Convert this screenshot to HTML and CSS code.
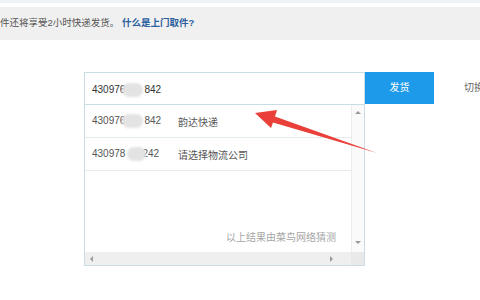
FILE: index.html
```html
<!DOCTYPE html>
<html lang="zh-CN">
<head>
<meta charset="utf-8">
<title>发货</title>
<link rel="stylesheet" href="styles.css">
</head>
<body>
<div class="topline"></div>
<div class="notice">件还将享受2小时快递发货。 <a class="notice-link">什么是上门取件?</a></div>
<div class="form">
  <div class="combo">
    <div class="input">430976<span class="mask"></span>842</div>
    <div class="dropdown">
      <div class="list">
        <div class="row"><span class="num">430976<span class="mask"></span>842</span><span class="co">韵达快递</span></div>
        <div class="row"><span class="num">430978<span class="mask m3"></span>242</span><span class="co">请选择物流公司</span></div>
        <div class="note">以上结果由菜鸟网络猜测</div>
      </div>
      <div class="vscroll"><span class="tri up"></span><span class="tri down"></span></div>
      <div class="hscroll"><span class="tri left"></span><span class="tri right"></span></div>
      <div class="corner"></div>
    </div>
  </div>
  <div class="btn">发货</div>
  <div class="switch">切换</div>
</div>
<svg class="arrow" width="480" height="300" viewBox="0 0 480 300">
  <polygon points="255,113 277,110 275,116.5 377,153 273,122.5 271,128" fill="#e9403a"/>
</svg>
</body>
</html>
```
FILE: styles.css
```css
html, body {
  margin: 0;
  padding: 0;
}
body {
  width: 480px;
  height: 300px;
  overflow: hidden;
  background: #ffffff;
  font-family: "Liberation Sans", "Noto Sans CJK SC", sans-serif;
  position: relative;
}
.topline {
  height: 3px;
  background: #edf2f8;
  border-bottom: 4px solid #ffffff;
}
.notice {
  height: 33px;
  line-height: 32px;
  background: #f0f0f0;
  font-size: 9.5px;
  color: #555555;
  white-space: nowrap;
}
.notice-link {
  color: #2c5f9e;
  font-weight: bold;
}
.form {
  display: flex;
  align-items: flex-start;
  margin: 32px 0 0 84px;
}
.form > * {
  flex-shrink: 0;
}
.combo {
  width: 281px;
}
.input {
  height: 31px;
  line-height: 33px;
  border: 1px solid #c8dde6;
  padding-left: 7px;
  font-size: 10px;
  color: #333333;
}
.mask {
  display: inline-block;
  width: 21px;
  height: 14px;
  margin: 0 1px 0 -3px;
  vertical-align: middle;
  border-radius: 7px;
  background: #e3e3e3;
  filter: blur(1px);
  position: relative;
  z-index: 1;
}
.mask.m3 {
  width: 19px;
  margin: 0 -4px 0 2px;
}
.dropdown {
  height: 160px;
  border: 1px solid #c8dde6;
  border-top: none;
  display: grid;
  grid-template-columns: 1fr 13px;
  grid-template-rows: 1fr 13px;
}
.list {
  display: flex;
  flex-direction: column;
  font-size: 10px;
  color: #555555;
}
.row {
  height: 32px;
  border-bottom: 1px solid #e4ebee;
  display: flex;
  align-items: center;
  padding-left: 7px;
}
.num {
  width: 86px;
}
.note {
  margin-top: auto;
  margin-bottom: 8px;
  padding-right: 15px;
  text-align: right;
  color: #a6a6a6;
}
.vscroll {
  border-left: 1px solid #ececec;
  background: #fafafa;
  display: flex;
  flex-direction: column;
  justify-content: space-between;
  align-items: center;
  padding: 6px 0 8px;
}
.hscroll {
  background: #efefef;
  display: flex;
  justify-content: space-between;
  align-items: center;
  padding: 0 18px 0 5px;
}
.corner {
  background: #e9e9e9;
}
.tri {
  width: 0;
  height: 0;
  border: 3px solid transparent;
}
.tri.up { border-bottom-color: #9a9a9a; border-top-width: 0; }
.tri.down { border-top-color: #9a9a9a; border-bottom-width: 0; }
.tri.left { border-right-color: #9a9a9a; border-left-width: 0; }
.tri.right { border-left-color: #9a9a9a; border-right-width: 0; }
.btn {
  width: 69px;
  height: 32px;
  line-height: 32px;
  background: #1e9aea;
  color: #ffffff;
  font-size: 10px;
  text-align: center;
}
.switch {
  margin-left: 30px;
  line-height: 32px;
  font-size: 10px;
  color: #666666;
  white-space: nowrap;
}
.arrow {
  position: absolute;
  left: 0;
  top: 0;
  pointer-events: none;
}
```
